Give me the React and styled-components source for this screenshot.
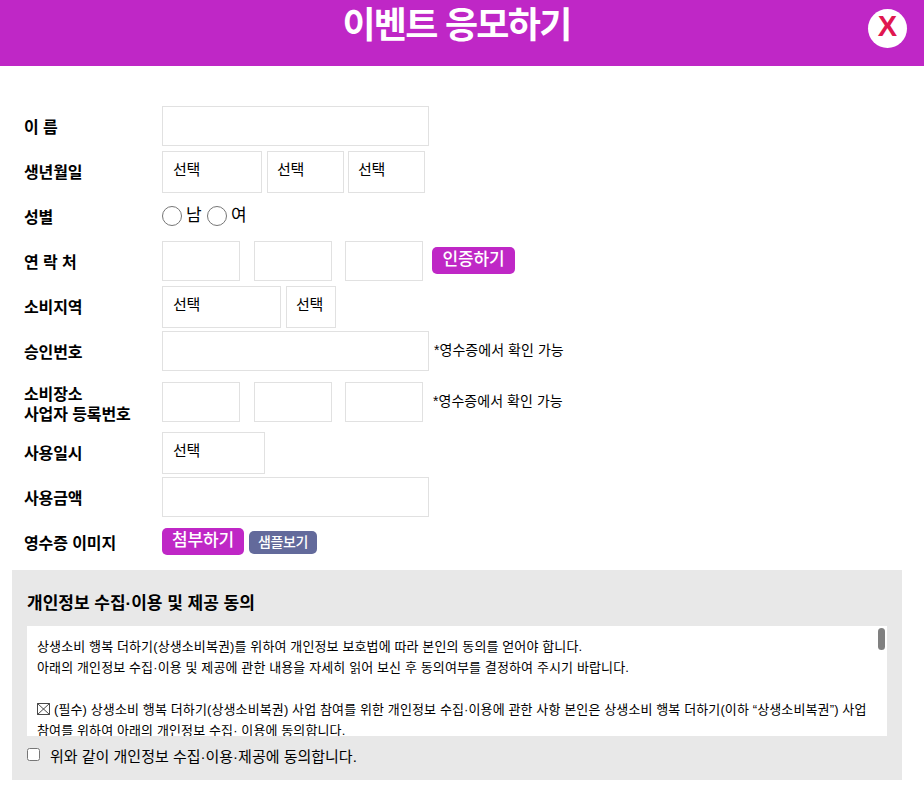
import React from "react";
import styled, { createGlobalStyle } from "styled-components";

const GlobalStyle = createGlobalStyle`
  html, body {
    margin: 0;
    padding: 0;
    background: #fff;
    color: #000;
    font-family: "Liberation Sans", "Noto Sans CJK KR", sans-serif;
  }
  * {
    box-sizing: border-box;
  }
`;

const Page = styled.div`
  width: 924px;
  height: 801px;
  overflow: hidden;
`;

const Header = styled.header`
  position: relative;
  height: 66px;
  background: #bf27c6;
  padding: 1px 11px 0 0;
`;

const Title = styled.h1`
  margin: 0;
  text-align: center;
  color: #fff;
  font-size: 36px;
  font-weight: 700;
  line-height: 50px;
  letter-spacing: -1.7px;
`;

const CloseButton = styled.button`
  position: absolute;
  top: 9px;
  right: 17px;
  width: 39px;
  height: 39px;
  padding: 0 0 5px;
  border: 0;
  border-radius: 50%;
  background: #fff;
  color: #e0174f;
  font-family: inherit;
  font-size: 29px;
  font-weight: 700;
  line-height: 34px;
`;

const Form = styled.form`
  padding: 40px 0 0 24px;
`;

const Row = styled.div`
  display: flex;
  align-items: flex-start;
  height: ${(p) => p.$height || 45}px;
`;

const Label = styled.label`
  flex: 0 0 138px;
  padding-top: ${(p) => p.$offset ?? 12}px;
  font-size: 16px;
  font-weight: 700;
  line-height: 20px;
  letter-spacing: -0.1px;
  white-space: pre-line;
`;

const Fields = styled.div`
  display: flex;
  align-items: flex-start;
  padding-top: ${(p) => p.$top ?? 0}px;
`;

const TextInput = styled.input`
  display: block;
  width: ${(p) => p.$width}px;
  height: 40px;
  margin-left: ${(p) => p.$left ?? 0}px;
  padding: 0 10px;
  border: 1px solid #e1e1e1;
  background: #fff;
  outline: none;
`;

const Select = styled.select`
  display: block;
  width: ${(p) => p.$width}px;
  height: 42px;
  margin-left: ${(p) => p.$left ?? 0}px;
  padding: 0 0 6px ${(p) => (p.$left ? 9 : 10)}px;
  border: 1px solid #e1e1e1;
  border-radius: 0;
  background: #fff;
  color: #000;
  font-family: inherit;
  font-size: 15px;
  letter-spacing: -0.2px;
  appearance: none;
`;

const RadioGroup = styled.div`
  display: flex;
  align-items: center;
  height: 40px;
  font-size: 17px;
`;

const Radio = styled.input.attrs({ type: "radio" })`
  width: 20px;
  height: 20px;
  margin: 0 4px 0 0;
  accent-color: #bf27c6;
`;

const RadioText = styled.span`
  width: 21px;
  position: relative;
  top: -3px;
`;

const Pill = styled.button`
  height: ${(p) => (p.$small ? 23 : 27)}px;
  width: ${(p) => p.$width}px;
  margin: ${(p) => p.$margin || 0};
  padding: 0 0 ${(p) => (p.$small ? 2 : 1)}px;
  border: 0;
  border-radius: 5px;
  background: ${(p) => (p.$small ? "#636a9b" : "#bf27c6")};
  color: #fff;
  font-family: inherit;
  font-size: ${(p) => (p.$small ? 14 : 17)}px;
  font-weight: 500;
  line-height: 20px;
  letter-spacing: ${(p) => (p.$small ? -0.4 : -0.2)}px;
`;

const Note = styled.span`
  margin: ${(p) => p.$margin};
  font-size: 14px;
  line-height: 20px;
  letter-spacing: 0.05px;
  white-space: nowrap;
`;

const Agreement = styled.section`
  width: 890px;
  height: 210px;
  margin-left: 12px;
  padding: 21px 15px 0;
  background: #e8e8e8;
`;

const AgreementTitle = styled.h2`
  margin: 0 0 10px;
  font-size: 17px;
  font-weight: 700;
  line-height: 25px;
`;

const TermsWrap = styled.div`
  position: relative;
  height: 110px;
`;

const TermsBox = styled.div`
  height: 110px;
  padding: 10px 20px 0 10px;
  background: #fff;
  overflow: hidden;
  font-size: 13px;
  line-height: 21px;
  letter-spacing: 0.12px;
`;

const ScrollThumb = styled.div`
  position: absolute;
  top: 2px;
  right: 2px;
  width: 7px;
  height: 22px;
  border-radius: 4px;
  background: #808080;
`;

const TermsLine = styled.p`
  margin: 0;
  min-height: 21px;
`;

const BoxMark = styled.svg`
  width: 13px;
  height: 12px;
  margin-right: 4px;
  vertical-align: -1px;
`;

const ConsentRow = styled.label`
  display: flex;
  align-items: center;
  height: 38px;
  font-size: 15px;
`;

const Check = styled.input.attrs({ type: "checkbox" })`
  width: 13px;
  height: 13px;
  margin: 0 10px 1px 0;
`;

const Options = () => <option>선택</option>;

export default function App() {
  return (
    <Page>
      <GlobalStyle />
      <Header>
        <Title>이벤트 응모하기</Title>
        <CloseButton type="button">X</CloseButton>
      </Header>
      <Form>
        <Row>
          <Label>이 름</Label>
          <Fields><TextInput $width={267} /></Fields>
        </Row>
        <Row>
          <Label>생년월일</Label>
          <Fields>
            <Select $width={100}><Options /></Select>
            <Select $width={77} $left={5}><Options /></Select>
            <Select $width={77} $left={4}><Options /></Select>
          </Fields>
        </Row>
        <Row>
          <Label>성별</Label>
          <RadioGroup>
            <Radio name="gender" />
            <RadioText>남</RadioText>
            <Radio name="gender" />
            <RadioText>여</RadioText>
          </RadioGroup>
        </Row>
        <Row>
          <Label>연 락 처</Label>
          <Fields>
            <TextInput $width={78} />
            <TextInput $width={78} $left={14} />
            <TextInput $width={78} $left={13} />
          </Fields>
          <Pill type="button" $width={83} $margin="6px 0 0 9px">인증하기</Pill>
        </Row>
        <Row>
          <Label>소비지역</Label>
          <Fields>
            <Select $width={119}><Options /></Select>
            <Select $width={50} $left={5}><Options /></Select>
          </Fields>
        </Row>
        <Row>
          <Label>승인번호</Label>
          <Fields><TextInput $width={267} /></Fields>
          <Note $margin="9px 0 0 5px">*영수증에서 확인 가능</Note>
        </Row>
        <Row $height={56}>
          <Label $offset={9}>{"소비장소\n사업자 등록번호"}</Label>
          <Fields $top={6}>
            <TextInput $width={78} />
            <TextInput $width={78} $left={14} />
            <TextInput $width={78} $left={13} />
          </Fields>
          <Note $margin="15px 0 0 10px">*영수증에서 확인 가능</Note>
        </Row>
        <Row>
          <Label>사용일시</Label>
          <Fields><Select $width={103}><Options /></Select></Fields>
        </Row>
        <Row>
          <Label>사용금액</Label>
          <Fields><TextInput $width={267} /></Fields>
        </Row>
        <Row $height={48}>
          <Label>영수증 이미지</Label>
          <Fields $top={6}>
            <Pill type="button" $width={82}>첨부하기</Pill>
            <Pill type="button" $small $width={68} $margin="3px 0 0 5px">샘플보기</Pill>
          </Fields>
        </Row>
      </Form>
      <Agreement>
        <AgreementTitle>개인정보 수집·이용 및 제공 동의</AgreementTitle>
        <TermsWrap>
          <TermsBox>
            <TermsLine>상생소비 행복 더하기(상생소비복권)를 위하여 개인정보 보호법에 따라 본인의 동의를 얻어야 합니다.</TermsLine>
            <TermsLine>아래의 개인정보 수집·이용 및 제공에 관한 내용을 자세히 읽어 보신 후 동의여부를 결정하여 주시기 바랍니다.</TermsLine>
            <TermsLine />
            <TermsLine>
              <BoxMark viewBox="0 0 13 12">
                <path d="M0.5 0.5H12.5V11.5H0.5Z M0.5 0.5L12.5 11.5 M12.5 0.5L0.5 11.5" fill="none" stroke="#333" strokeWidth="0.9" />
              </BoxMark>
              (필수) 상생소비 행복 더하기(상생소비복권) 사업 참여를 위한 개인정보 수집·이용에 관한 사항 본인은 상생소비 행복 더하기(이하 “상생소비복권”) 사업 참여를 위하여 아래의 개인정보 수집· 이용에 동의합니다.
            </TermsLine>
          </TermsBox>
          <ScrollThumb />
        </TermsWrap>
        <ConsentRow>
          <Check />
          위와 같이 개인정보 수집·이용·제공에 동의합니다.
        </ConsentRow>
      </Agreement>
    </Page>
  );
}
